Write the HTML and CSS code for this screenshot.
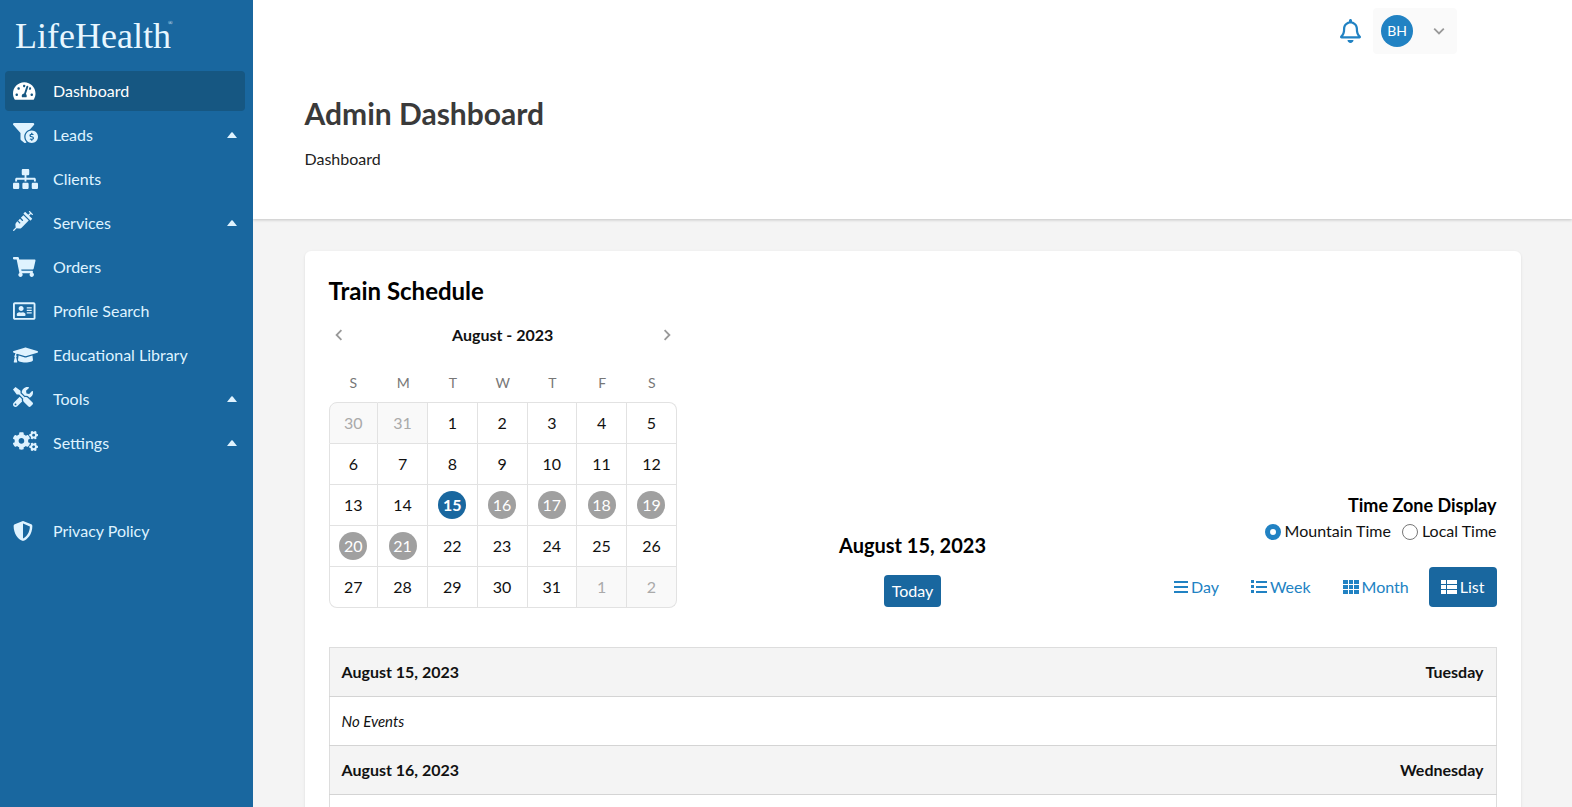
FILE: index.html
```html
<!DOCTYPE html>
<html lang="en">
<head>
    <meta charset="utf-8">
    <title>Admin Dashboard</title>
    <link rel="stylesheet" href="styles.css">
</head>
<body>
    <div class="app">
        <aside class="sidebar">
            <a href="#" class="logo">LifeHealth<sup>®</sup></a>
            <nav class="menu">
                <a href="#" class="menu-item active">
                    <svg class="menu-icon" viewBox="0 0 576 512"><path d="M288 32C128.94 32 0 160.94 0 320c0 52.8 14.25 102.26 39.06 144.8 5.61 9.62 16.3 15.2 27.44 15.2h443c11.14 0 21.83-5.58 27.44-15.2C561.75 422.26 576 372.8 576 320c0-159.06-128.94-288-288-288zm0 64c14.71 0 26.58 10.13 30.32 23.65-1.11 2.26-2.64 4.23-3.45 6.67l-9.22 27.67c-5.13 3.49-10.97 6.01-17.64 6.01-17.67 0-32-14.33-32-32S270.33 96 288 96zM96 384c-17.67 0-32-14.33-32-32s14.33-32 32-32 32 14.33 32 32-14.33 32-32 32zm48-160c-17.67 0-32-14.33-32-32s14.33-32 32-32 32 14.33 32 32-14.33 32-32 32zm246.77-72.41l-61.33 184C343.13 347.33 352 364.54 352 384c0 11.72-3.38 22.55-8.88 32H232.88c-5.5-9.45-8.88-20.28-8.88-32 0-33.94 26.5-61.43 59.9-63.59l61.34-184.01c4.17-12.56 17.73-19.45 30.36-15.17 12.57 4.19 19.35 17.79 15.17 30.36zm14.66 57.2l15.52-46.55c3.47-1.29 7.13-2.23 11.05-2.23 17.67 0 32 14.33 32 32s-14.33 32-32 32c-11.38-.01-20.89-6.28-26.57-15.22zM480 384c-17.67 0-32-14.33-32-32s14.33-32 32-32 32 14.33 32 32-14.33 32-32 32z"/></svg>
                    <span>Dashboard</span>
                </a>
                <a href="#" class="menu-item has-submenu">
                    <svg class="menu-icon" viewBox="0 0 640 512"><path d="M433.46 165.94l101.2-111.87C554.61 34.12 540.48 0 512.26 0H31.74C3.52 0-10.61 34.12 9.34 54.07L192 256v155.92c0 12.59 5.93 24.44 16 32l79.99 60c20.86 15.64 48.47 6.97 59.22-13.57C310.8 455.38 288 406.35 288 352c0-89.79 62.05-165.17 145.46-186.06zM480 192c-88.37 0-160 71.63-160 160s71.63 160 160 160 160-71.63 160-160-71.63-160-160-160zm16 239.88V448c0 4.42-3.58 8-8 8h-16c-4.42 0-8-3.58-8-8v-16.29c-11.29-.58-22.27-4.52-31.37-11.35-3.9-2.93-4.1-8.77-.57-12.14l11.75-11.21c2.77-2.64 6.89-2.76 10.13-.73 3.87 2.42 8.26 3.72 12.82 3.72h28.11c6.5 0 11.8-5.92 11.8-13.19 0-5.95-3.61-11.19-8.77-12.73l-45-13.5c-18.59-5.58-31.58-23.42-31.58-43.39 0-24.52 19.05-44.44 42.67-45.07V256c0-4.42 3.58-8 8-8h16c4.42 0 8 3.58 8 8v16.29c11.29.58 22.27 4.51 31.37 11.35 3.9 2.93 4.1 8.77.57 12.14l-11.75 11.21c-2.77 2.64-6.89 2.76-10.13.73-3.87-2.43-8.26-3.72-12.82-3.72h-28.11c-6.5 0-11.8 5.92-11.8 13.19 0 5.95 3.61 11.19 8.77 12.73l45 13.5c18.59 5.58 31.58 23.42 31.58 43.39 0 24.53-19.04 44.44-42.67 45.07z"/></svg>
                    <span>Leads</span>
                    <svg class="caret" viewBox="0 0 10 6"><path d="M0 6L4.3.6Q5 0 5.7.6L10 6z"/></svg>
                </a>
                <a href="#" class="menu-item">
                    <svg class="menu-icon" viewBox="0 0 640 512"><path d="M128 352H32c-17.67 0-32 14.33-32 32v96c0 17.67 14.33 32 32 32h96c17.67 0 32-14.33 32-32v-96c0-17.67-14.33-32-32-32zm-24-80h192v48h48v-48h192v48h48v-57.59c0-21.17-17.23-38.41-38.41-38.41H344v-64h40c17.67 0 32-14.33 32-32V32c0-17.67-14.33-32-32-32H256c-17.67 0-32 14.33-32 32v96c0 17.67 14.33 32 32 32h40v64H94.41C73.23 224 56 241.23 56 262.41V320h48v-48zm264 80h-96c-17.67 0-32 14.33-32 32v96c0 17.67 14.33 32 32 32h96c17.67 0 32-14.33 32-32v-96c0-17.67-14.33-32-32-32zm240 0h-96c-17.67 0-32 14.33-32 32v96c0 17.67 14.33 32 32 32h96c17.67 0 32-14.33 32-32v-96c0-17.67-14.33-32-32-32z"/></svg>
                    <span>Clients</span>
                </a>
                <a href="#" class="menu-item has-submenu">
                    <svg class="menu-icon" viewBox="0 0 512 512"><path d="M201.5 174.8l55.7 55.8c3.1 3.1 3.1 8.2 0 11.3l-11.3 11.3c-3.1 3.1-8.2 3.1-11.3 0l-55.7-55.8-45.3 45.3 55.8 55.8c3.1 3.1 3.1 8.2 0 11.3l-11.3 11.3c-3.1 3.1-8.2 3.1-11.3 0L111 265.2l-26.4 26.4c-17.3 17.3-25.6 41.1-23 65.4l7.1 63.6L2.3 487c-3.1 3.1-3.1 8.2 0 11.3l11.3 11.3c3.1 3.1 8.2 3.1 11.3 0l66.3-66.3 63.6 7.1c23.9 2.6 47.9-5.4 65.4-23l181.9-181.9-135.7-135.7-64.9 65zm308.2-93.3L430.5 2.3c-3.1-3.1-8.2-3.1-11.3 0l-11.3 11.3c-3.1 3.1-3.1 8.2 0 11.3l28.3 28.3-45.3 45.3-56.6-56.6-17-17c-3.1-3.1-8.2-3.1-11.3 0l-33.9 33.9c-3.1 3.1-3.1 8.2 0 11.3l17 17L424.8 223l17 17c3.1 3.1 8.2 3.1 11.3 0l33.9-34c3.1-3.1 3.1-8.2 0-11.3l-73.5-73.5 45.3-45.3 28.3 28.3c3.1 3.1 8.2 3.1 11.3 0l11.3-11.3c3.1-3.2 3.1-8.2 0-11.4z"/></svg>
                    <span>Services</span>
                    <svg class="caret" viewBox="0 0 10 6"><path d="M0 6L4.3.6Q5 0 5.7.6L10 6z"/></svg>
                </a>
                <a href="#" class="menu-item">
                    <svg class="menu-icon" viewBox="0 0 576 512"><path d="M528.12 301.319l47.273-208C578.806 78.301 567.391 64 551.99 64H159.208l-9.166-44.81C147.758 8.021 137.93 0 126.529 0H24C10.745 0 0 10.745 0 24v16c0 13.255 10.745 24 24 24h69.883l70.248 343.435C147.325 417.1 136 435.222 136 456c0 30.928 25.072 56 56 56s56-25.072 56-56c0-15.674-6.447-29.835-16.824-40h209.647C430.447 426.165 424 440.326 424 456c0 30.928 25.072 56 56 56s56-25.072 56-56c0-22.172-12.888-41.332-31.579-50.405l5.517-24.276c3.413-15.018-8.002-29.319-23.403-29.319H218.117l-6.545-32h293.145c11.206 0 20.92-7.754 23.403-18.681z"/></svg>
                    <span>Orders</span>
                </a>
                <a href="#" class="menu-item">
                    <svg class="menu-icon" viewBox="0 0 576 512"><path d="M528 32H48C21.5 32 0 53.5 0 80v352c0 26.5 21.5 48 48 48h480c26.5 0 48-21.5 48-48V80c0-26.5-21.5-48-48-48zm0 400H48V80h480v352zM208 256c35.3 0 64-28.7 64-64s-28.7-64-64-64-64 28.7-64 64 28.7 64 64 64zm-89.6 128h179.2c12.4 0 22.4-8.6 22.4-19.2v-19.2c0-31.8-30.1-57.6-67.2-57.6-10.8 0-18.7 8-44.8 8-26.9 0-33.4-8-44.8-8-37.1 0-67.2 25.8-67.2 57.6v19.2c0 10.6 10 19.2 22.4 19.2zM360 320h112c4.4 0 8-3.6 8-8v-16c0-4.4-3.6-8-8-8H360c-4.4 0-8 3.6-8 8v16c0 4.4 3.6 8 8 8zm0-64h112c4.4 0 8-3.6 8-8v-16c0-4.4-3.6-8-8-8H360c-4.4 0-8 3.6-8 8v16c0 4.4 3.6 8 8 8zm0-64h112c4.4 0 8-3.6 8-8v-16c0-4.4-3.6-8-8-8H360c-4.4 0-8 3.6-8 8v16c0 4.4 3.6 8 8 8z"/></svg>
                    <span>Profile Search</span>
                </a>
                <a href="#" class="menu-item">
                    <svg class="menu-icon" viewBox="0 0 640 512"><path d="M622.34 153.2L343.4 67.5c-15.2-4.67-31.6-4.67-46.79 0L17.66 153.2c-23.54 7.23-23.54 38.36 0 45.59l48.63 14.94c-10.67 13.19-17.23 29.28-17.88 46.9C38.78 266.15 32 276.11 32 288c0 10.78 5.68 19.85 13.86 25.65L20.33 428.53C18.11 438.52 25.71 448 35.94 448h56.11c10.24 0 17.84-9.48 15.62-19.47L82.14 313.65C90.32 307.85 96 298.78 96 288c0-11.57-6.47-21.25-15.66-26.87.76-15.02 8.44-28.3 20.69-36.72L296.6 284.5c9.06 2.78 26.44 6.25 46.79 0l278.95-85.7c23.55-7.24 23.55-38.36 0-45.6zM352.79 315.09c-28.53 8.76-52.84 3.92-65.59 0l-145.02-44.55L128 384c0 35.35 85.96 64 192 64s192-28.65 192-64l-14.18-113.47-145.03 44.56z"/></svg>
                    <span>Educational Library</span>
                </a>
                <a href="#" class="menu-item has-submenu">
                    <svg class="menu-icon" viewBox="0 0 512 512"><path d="M501.1 395.7L384 278.6c-23.1-23.1-57.6-27.6-85.4-13.9L192 158.1V96L64 0 0 64l96 128h62.1l106.6 106.6c-13.6 27.8-9.2 62.3 13.9 85.4l117.1 117.1c14.6 14.6 38.2 14.6 52.7 0l52.7-52.7c14.5-14.6 14.5-38.2 0-52.7zM331.7 225c28.3 0 54.9 11 74.9 31l19.4 19.4c15.8-6.9 30.8-16.5 43.8-29.5 37.1-37.1 49.7-89.3 37.9-136.7-2.2-9-13.5-12.1-20.1-5.5l-74.4 74.4-67.9-11.3L334 98.9l74.4-74.4c6.6-6.6 3.4-17.9-5.7-20.2-47.4-11.7-99.6.9-136.6 37.9-28.5 28.5-41.9 66.1-41.2 103.6l82.1 82.1c8.1-1.9 16.5-2.9 24.7-2.9zm-103.9 82l-56.7-56.7L18.7 402.8c-25 25-25 65.5 0 90.5s65.5 25 90.5 0l123.6-123.6c-7.6-19.9-9.9-41.6-5-62.7zM64 472c-13.2 0-24-10.8-24-24 0-13.3 10.7-24 24-24s24 10.7 24 24c0 13.2-10.7 24-24 24z"/></svg>
                    <span>Tools</span>
                    <svg class="caret" viewBox="0 0 10 6"><path d="M0 6L4.3.6Q5 0 5.7.6L10 6z"/></svg>
                </a>
                <a href="#" class="menu-item has-submenu">
                    <svg class="menu-icon" viewBox="0 0 640 512"><path d="M512.1 191l-8.2 14.3c-3 5.3-9.4 7.5-15.1 5.4-11.8-4.4-22.6-10.7-32.1-18.6-4.6-3.8-5.8-10.5-2.8-15.7l8.2-14.3c-6.9-8-12.3-17.3-15.9-27.4h-16.5c-6 0-11.2-4.3-12.2-10.3-2-12-2.1-24.6 0-37.1 1-6 6.2-10.4 12.2-10.4h16.5c3.6-10.1 9-19.4 15.9-27.4l-8.2-14.3c-3-5.2-1.9-11.9 2.8-15.7 9.5-7.9 20.4-14.2 32.1-18.6 5.7-2.1 12.1.1 15.1 5.4l8.2 14.3c10.5-1.9 21.2-1.9 31.7 0L552 6.3c3-5.3 9.4-7.5 15.1-5.4 11.8 4.4 22.6 10.7 32.1 18.6 4.6 3.8 5.8 10.5 2.8 15.7l-8.2 14.3c6.9 8 12.3 17.3 15.9 27.4h16.5c6 0 11.2 4.3 12.2 10.3 2 12 2.1 24.6 0 37.1-1 6-6.2 10.4-12.2 10.4h-16.5c-3.6 10.1-9 19.4-15.9 27.4l8.2 14.3c3 5.2 1.9 11.9-2.8 15.7-9.5 7.9-20.4 14.2-32.1 18.6-5.7 2.1-12.1-.1-15.1-5.4l-8.2-14.3c-10.4 1.9-21.2 1.9-31.7 0zm-10.5-58.8c38.5 29.6 82.4-14.3 52.8-52.8-38.5-29.7-82.4 14.3-52.8 52.8zM386.3 286.1l33.7 16.8c10.1 5.8 14.5 18.1 10.5 29.1-8.9 24.2-26.4 46.4-42.6 65.8-7.4 8.9-20.2 11.1-30.3 5.3l-29.1-16.8c-16 13.7-34.6 24.6-54.9 31.7v33.6c0 11.6-8.3 21.6-19.7 23.6-24.6 4.2-50.4 4.4-75.9 0-11.5-2-20-11.9-20-23.6V418c-20.3-7.2-38.9-18-54.9-31.7L74 403c-10 5.8-22.9 3.6-30.3-5.3-16.2-19.4-33.3-41.6-42.2-65.7-4-10.9.4-23.2 10.5-29.1l33.3-16.8c-3.9-20.9-3.9-42.4 0-63.4L12 205.8c-10.1-5.8-14.6-18.1-10.5-29 8.9-24.2 26-46.4 42.2-65.8 7.4-8.9 20.2-11.1 30.3-5.3l29.1 16.8c16-13.7 34.6-24.6 54.9-31.7V57.1c0-11.5 8.2-21.5 19.6-23.5 24.6-4.2 50.5-4.4 76-.1 11.5 2 20 11.9 20 23.6v33.6c20.3 7.2 38.9 18 54.9 31.7l29.1-16.8c10-5.8 22.9-3.6 30.3 5.3 16.2 19.4 33.2 41.6 42.1 65.8 4 10.9.1 23.2-10 29.1l-33.7 16.8c3.9 21 3.9 42.5 0 63.5zm-117.6 21.1c59.2-77-28.7-164.9-105.7-105.7-59.2 77 28.7 164.9 105.7 105.7zm243.4 182.7l-8.2 14.3c-3 5.3-9.4 7.5-15.1 5.4-11.8-4.4-22.6-10.7-32.1-18.6-4.6-3.8-5.8-10.5-2.8-15.7l8.2-14.3c-6.9-8-12.3-17.3-15.9-27.4h-16.5c-6 0-11.2-4.3-12.2-10.3-2-12-2.1-24.6 0-37.1 1-6 6.2-10.4 12.2-10.4h16.5c3.6-10.1 9-19.4 15.9-27.4l-8.2-14.3c-3-5.2-1.9-11.9 2.8-15.7 9.5-7.9 20.4-14.2 32.1-18.6 5.7-2.1 12.1.1 15.1 5.4l8.2 14.3c10.5-1.9 21.2-1.9 31.7 0l8.2-14.3c3-5.3 9.4-7.5 15.1-5.4 11.8 4.4 22.6 10.7 32.1 18.6 4.6 3.8 5.8 10.5 2.8 15.7l-8.2 14.3c6.9 8 12.3 17.3 15.9 27.4h16.5c6 0 11.2 4.3 12.2 10.3 2 12 2.1 24.6 0 37.1-1 6-6.2 10.4-12.2 10.4h-16.5c-3.6 10.1-9 19.4-15.9 27.4l8.2 14.3c3 5.2 1.9 11.9-2.8 15.7-9.5 7.9-20.4 14.2-32.1 18.6-5.7 2.1-12.1-.1-15.1-5.4l-8.2-14.3c-10.4 1.9-21.2 1.9-31.7 0zM501.6 431c38.5 29.6 82.4-14.3 52.8-52.8-38.5-29.6-82.4 14.3-52.8 52.8z"/></svg>
                    <span>Settings</span>
                    <svg class="caret" viewBox="0 0 10 6"><path d="M0 6L4.3.6Q5 0 5.7.6L10 6z"/></svg>
                </a>
                <a href="#" class="menu-item menu-footer">
                    <svg class="menu-icon" viewBox="0 0 512 512"><path d="M466.5 83.7l-192-80a48.15 48.15 0 0 0-36.9 0l-192 80C27.7 91.1 16 108.6 16 128c0 198.5 114.5 335.7 221.5 380.3 11.8 4.9 25.1 4.9 36.9 0C360.1 472.6 496 349.3 496 128c0-19.4-11.7-36.9-29.5-44.3zM256.1 446.3l-.1-381 175.9 73.3c-3.3 151.4-82.1 261.1-175.8 307.7z"/></svg>
                    <span>Privacy Policy</span>
                </a>
            </nav>
        </aside>

        <main class="main">
            <header class="page-header">
                <div class="topbar">
                    <button class="bell" aria-label="Notifications">
                        <svg viewBox="0 0 448 512"><path d="M439.39 362.29c-19.32-20.76-55.47-51.99-55.47-154.29 0-77.7-54.48-139.9-127.94-155.16V32c0-17.67-14.32-32-31.98-32s-31.98 14.33-31.98 32v20.84C118.56 68.1 64.08 130.3 64.08 208c0 102.3-36.15 133.53-55.47 154.29-6 6.45-8.66 14.16-8.61 21.71.11 16.4 12.98 32 32.1 32h383.8c19.12 0 32-15.6 32.1-32 .05-7.55-2.61-15.27-8.61-21.71zM67.53 368c21.22-27.97 44.42-74.33 44.53-159.42 0-.2-.06-.38-.06-.58 0-61.86 50.14-112 112-112s112 50.14 112 112c0 .2-.06.38-.06.58.11 85.1 23.31 131.46 44.53 159.42H67.53zM224 512c35.32 0 63.97-28.65 63.97-64H160.03c0 35.35 28.65 64 63.97 64z"/></svg>
                    </button>
                    <button class="user-menu">
                        <span class="avatar">BH</span>
                        <svg class="chevron" viewBox="0 0 10 10"><path d="M1 3l4 4 4-4"/></svg>
                    </button>
                </div>
                <div class="container">
                    <h1>Admin Dashboard</h1>
                    <p class="breadcrumb">Dashboard</p>
                </div>
            </header>

            <div class="container">
                <section class="card">
                    <h2>Train Schedule</h2>
                    <div class="schedule">
                        <div class="calendar">
                            <div class="calendar-nav">
                                <button aria-label="Previous month"><svg class="chevron" viewBox="0 0 10 10"><path d="M7 1L3 5l4 4"/></svg></button>
                                <span>August - 2023</span>
                                <button aria-label="Next month"><svg class="chevron" viewBox="0 0 10 10"><path d="M3 1l4 4-4 4"/></svg></button>
                            </div>
                            <table class="days">
                                <thead>
                                    <tr><th>S</th><th>M</th><th>T</th><th>W</th><th>T</th><th>F</th><th>S</th></tr>
                                </thead>
                                <tbody>
                                    <tr>
                                        <td class="outside"><button>30</button></td>
                                        <td class="outside"><button>31</button></td>
                                        <td><button>1</button></td>
                                        <td><button>2</button></td>
                                        <td><button>3</button></td>
                                        <td><button>4</button></td>
                                        <td><button>5</button></td>
                                    </tr>
                                    <tr>
                                        <td><button>6</button></td>
                                        <td><button>7</button></td>
                                        <td><button>8</button></td>
                                        <td><button>9</button></td>
                                        <td><button>10</button></td>
                                        <td><button>11</button></td>
                                        <td><button>12</button></td>
                                    </tr>
                                    <tr>
                                        <td><button>13</button></td>
                                        <td><button>14</button></td>
                                        <td><button class="selected">15</button></td>
                                        <td><button class="in-range">16</button></td>
                                        <td><button class="in-range">17</button></td>
                                        <td><button class="in-range">18</button></td>
                                        <td><button class="in-range">19</button></td>
                                    </tr>
                                    <tr>
                                        <td><button class="in-range">20</button></td>
                                        <td><button class="in-range">21</button></td>
                                        <td><button>22</button></td>
                                        <td><button>23</button></td>
                                        <td><button>24</button></td>
                                        <td><button>25</button></td>
                                        <td><button>26</button></td>
                                    </tr>
                                    <tr>
                                        <td><button>27</button></td>
                                        <td><button>28</button></td>
                                        <td><button>29</button></td>
                                        <td><button>30</button></td>
                                        <td><button>31</button></td>
                                        <td class="outside"><button>1</button></td>
                                        <td class="outside"><button>2</button></td>
                                    </tr>
                                </tbody>
                            </table>
                        </div>

                        <div class="current-date">
                            <h3>August 15, 2023</h3>
                            <button class="today">Today</button>
                        </div>

                        <div class="view-options">
                            <fieldset class="timezone">
                                <legend>Time Zone Display</legend>
                                <div class="radios">
                                    <label><input type="radio" name="timezone" checked>Mountain Time</label>
                                    <label><input type="radio" name="timezone">Local Time</label>
                                </div>
                            </fieldset>
                            <div class="views">
                                <button class="view">
                                    <svg class="bars" viewBox="0 0 14 16"><path d="M0 2h14v2H0zM0 7h14v2H0zM0 12h14v2H0z"/></svg>Day
                                </button>
                                <button class="view">
                                    <svg viewBox="0 0 16 16"><path d="M0 1h3v3H0zM0 6h3v3H0zM0 11h3v3H0zM5 2h11v2H5zM5 7h11v2H5zM5 12h11v2H5z"/></svg>Week
                                </button>
                                <button class="view">
                                    <svg viewBox="0 0 16 16"><path d="M0 1h5v4H0zM6 1h4v4H6zM11 1h5v4h-5zM0 6h5v4H0zM6 6h4v4H6zM11 6h5v4h-5zM0 11h5v4H0zM6 11h4v4H6zM11 11h5v4h-5z"/></svg>Month
                                </button>
                                <button class="view active">
                                    <svg viewBox="0 0 16 16"><path d="M0 1h5v4H0zM6 1h10v4H6zM0 6h5v4H0zM6 6h10v4H6zM0 11h5v4H0zM6 11h10v4H6z"/></svg>List
                                </button>
                            </div>
                        </div>
                    </div>

                    <table class="events">
                        <tr class="event-day"><th>August 15, 2023</th><th>Tuesday</th></tr>
                        <tr><td colspan="2">No Events</td></tr>
                        <tr class="event-day"><th>August 16, 2023</th><th>Wednesday</th></tr>
                        <tr><td colspan="2"></td></tr>
                    </table>
                </section>
            </div>
        </main>
    </div>
</body>
</html>
```
FILE: styles.css
```css
* {
    box-sizing: border-box;
}
body {
    margin: 0;
    font-family: Lato, sans-serif;
    font-size: 16px;
    line-height: 24px;
    color: #111;
    background-color: #f4f4f4;
}
button {
    font: inherit;
    color: inherit;
    border: none;
    background: none;
    padding: 0;
    cursor: pointer;
}
svg {
    fill: currentColor;
    display: block;
    flex: none;
}
h1, h2, h3, p {
    margin: 0;
}
.app {
    display: flex;
    height: 100vh;
}

/* Sidebar */
.sidebar {
    width: 253px;
    flex: none;
    background-color: #19679f;
    color: #dff3ff;
}
.logo {
    display: block;
    padding: 16px 16px 15px 15px;
    font-family: "Liberation Serif", serif;
    font-size: 36px;
    line-height: 40px;
    color: #e8f7ff;
    text-decoration: none;
}
.logo sup {
    margin-left: -3px;
    font-size: 6px;
    line-height: 14px;
    vertical-align: top;
}
.menu {
    display: flex;
    flex-direction: column;
    gap: 4px;
    padding: 0 8px 0 5px;
}
.menu-item {
    display: grid;
    grid-template-columns: 40px 1fr 10px;
    align-items: center;
    height: 40px;
    padding: 0 8px;
    border-radius: 4px;
    color: inherit;
    text-decoration: none;
}
.menu-item.active {
    background-color: #165782;
    color: white;
}
.menu-icon {
    height: 20px;
}
.has-submenu .menu-icon {
    margin-bottom: 4px;
}
.menu-footer {
    margin-top: 44px;
}
.caret {
    width: 10px;
}

/* Header */
.main {
    flex: 1;
    overflow: auto;
    scrollbar-width: none;
}
.page-header {
    background-color: white;
    padding: 8px 0 48px;
    margin-bottom: 32px;
    box-shadow: 0 1px 3px rgba(0,0,0,0.2);
}
.topbar {
    display: flex;
    justify-content: flex-end;
    align-items: center;
    gap: 12px;
    padding-right: 115px;
}
.bell {
    color: #2182c3;
}
.bell svg {
    height: 24px;
}
.user-menu {
    display: flex;
    align-items: center;
    gap: 20px;
    padding: 7px 12px 7px 8px;
    border-radius: 4px;
    background-color: #fafafa;
}
.avatar {
    width: 32px;
    line-height: 32px;
    border-radius: 50%;
    font-size: 14px;
    background-color: #2182c3;
    color: white;
}
.chevron {
    width: 12px;
    fill: none;
    stroke: #999;
    stroke-width: 1.5;
}
.container {
    max-width: 1216px;
    margin: 0 auto;
}
h1 {
    padding-top: 39px;
    font-size: 30px;
    line-height: 40px;
    color: #3a3a3a;
}
.breadcrumb {
    padding-top: 14px;
    color: #222;
}

/* Schedule */
.card {
    padding: 24px;
    border-radius: 6px;
    background-color: white;
    box-shadow: 0 1px 3px rgba(0,0,0,0.1);
}
h2 {
    font-size: 24px;
    line-height: 32px;
    color: black;
}
.schedule {
    display: grid;
    grid-template-columns: repeat(3, 1fr);
    align-items: end;
    padding: 16px 0 40px;
}
.calendar {
    margin: 0 41px -1px 0;
}
.calendar-nav {
    display: flex;
    justify-content: space-between;
    padding: 0 4px;
    font-weight: bold;
}
.calendar-nav button {
    display: flex;
    align-items: center;
}
.days {
    width: 100%;
    margin-top: 24px;
    table-layout: fixed;
    border-spacing: 0;
    text-align: center;
}
.days th {
    padding: 0 0 7px;
    font-size: 14px;
    font-weight: normal;
    color: #777;
}
.days td {
    height: 41px;
    padding: 0;
    border: solid #e2e2e2;
    border-width: 0 1px 1px 0;
}
.days td:first-child {
    border-left-width: 1px;
}
.days tr:first-child td {
    height: 42px;
    border-top-width: 1px;
}
.days tr:first-child td:first-child {
    border-top-left-radius: 8px;
}
.days tr:first-child td:last-child {
    border-top-right-radius: 8px;
}
.days tr:last-child td:first-child {
    border-bottom-left-radius: 8px;
}
.days tr:last-child td:last-child {
    border-bottom-right-radius: 8px;
}
.days td button {
    width: 28px;
    height: 28px;
    border-radius: 50%;
}
.days .outside {
    background-color: #f9f9f9;
    color: #aaa;
}
.days .selected {
    background-color: #19679f;
    color: white;
    font-weight: bold;
}
.days .in-range {
    background-color: #a0a0a0;
    color: white;
}
.current-date {
    text-align: center;
}
h3 {
    font-size: 20px;
    line-height: 24px;
    padding-bottom: 18px;
    color: black;
}
.today {
    height: 32px;
    padding: 0 8px;
    border-radius: 4px;
    background-color: #19679f;
    color: white;
}
.today, .days td button {
    vertical-align: middle;
}
.view-options {
    display: flex;
    flex-direction: column;
    align-items: flex-end;
    gap: 24px;
}
.timezone {
    border: none;
    margin: 0;
    padding: 0;
}
.timezone legend {
    margin-left: auto;
    padding: 0;
    font-size: 18px;
    line-height: 28px;
    font-weight: bold;
    color: black;
}
.radios {
    display: flex;
    gap: 11px;
}
.radios label {
    display: flex;
    align-items: center;
    gap: 4px;
}
.radios input {
    appearance: none;
    width: 16px;
    height: 16px;
    margin: 2px 0 0;
    border: 1px solid #777;
    border-radius: 50%;
    background-color: white;
}
.radios input:checked {
    border: 5px solid #2182c3;
}
.views {
    display: flex;
    gap: 8px;
}
.view {
    display: flex;
    align-items: center;
    gap: 3px;
    height: 40px;
    padding: 0 12px;
    border-radius: 4px;
    color: #2182c3;
}
.view svg {
    width: 16px;
}
.view .bars {
    width: 14px;
}
.view.active {
    background-color: #19679f;
    color: white;
}

/* Event list */
.events {
    width: 100%;
    border-collapse: collapse;
    border: 1px solid #ddd;
}
.events th, .events td {
    height: 49px;
    padding: 0 12px;
    border-bottom: 1px solid #d4d4d4;
    text-align: left;
}
.events th:last-child {
    text-align: right;
}
.event-day {
    background-color: #f4f4f4;
}
.events td {
    font-size: 15px;
    font-style: italic;
}
```
